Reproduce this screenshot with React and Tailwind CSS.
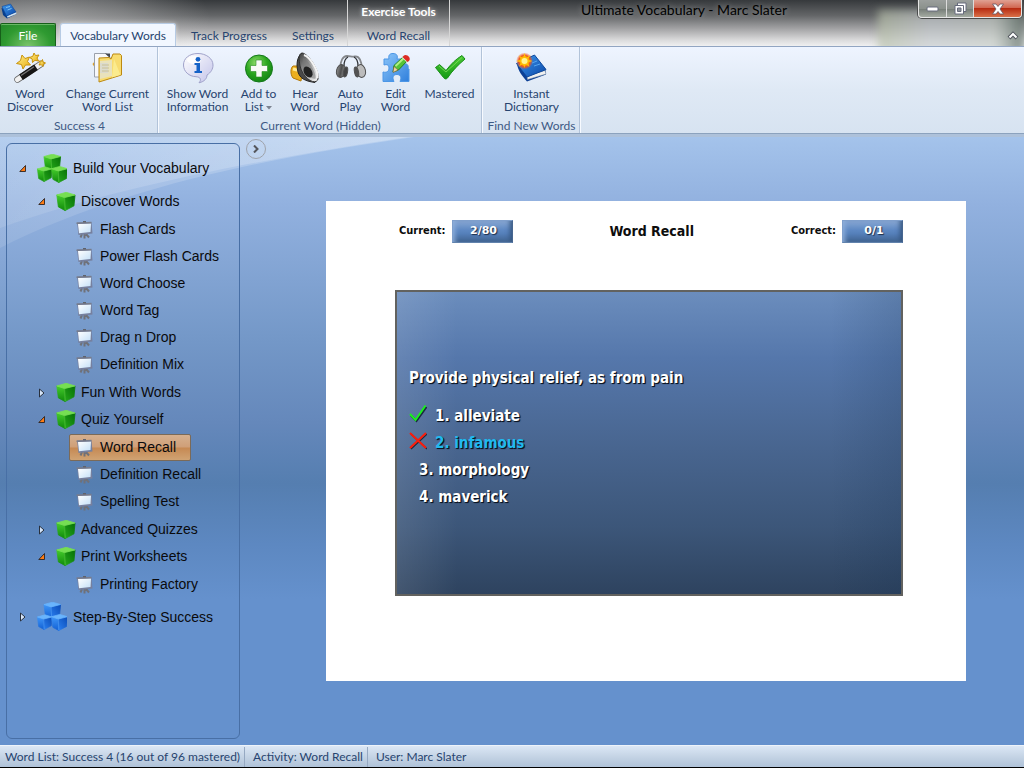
import React from "react";

const lato = "font-[Lato,'Open_Sans',sans-serif]";

function Defs() {
  return (
    <svg width="0" height="0" className="absolute" aria-hidden="true">
      <defs>
        <linearGradient id="gold" x1="0" y1="0" x2="1" y2="1">
          <stop offset="0" stopColor="#fff08a" />
          <stop offset="1" stopColor="#e8ab10" />
        </linearGradient>
        <linearGradient id="steel" x1="0" y1="0" x2="1" y2="1">
          <stop offset="0" stopColor="#3a3a3a" />
          <stop offset=".5" stopColor="#a8a8a8" />
          <stop offset="1" stopColor="#fafafa" />
        </linearGradient>
        <linearGradient id="bubble" x1="0" y1="0" x2="1" y2="1">
          <stop offset="0" stopColor="#ffffff" />
          <stop offset="1" stopColor="#c3c4ea" />
        </linearGradient>
        <radialGradient id="plus" cx=".4" cy=".3" r=".8">
          <stop offset="0" stopColor="#8fdc6a" />
          <stop offset=".5" stopColor="#2ba61f" />
          <stop offset="1" stopColor="#0e7c12" />
        </radialGradient>
        <linearGradient id="puzzle" x1="0" y1="0" x2="1" y2="1">
          <stop offset="0" stopColor="#8cc6fa" />
          <stop offset="1" stopColor="#2f7fdc" />
        </linearGradient>
        <linearGradient id="tick" x1="0" y1="0" x2="0" y2="1">
          <stop offset="0" stopColor="#4cc935" />
          <stop offset="1" stopColor="#149a14" />
        </linearGradient>
        <linearGradient id="cover" x1="0" y1="0" x2="1" y2="1">
          <stop offset="0" stopColor="#3f9bf0" />
          <stop offset="1" stopColor="#0b47a8" />
        </linearGradient>
        <radialGradient id="spark">
          <stop offset="0" stopColor="#fffbe0" />
          <stop offset=".4" stopColor="#ffc800" />
          <stop offset=".65" stopColor="#f2571c" />
          <stop offset="1" stopColor="#f2571c" stopOpacity="0" />
        </radialGradient>
        <linearGradient id="can" x1="0" y1="0" x2="1" y2="0">
          <stop offset="0" stopColor="#8d8d8d" />
          <stop offset=".5" stopColor="#4e4e4e" />
          <stop offset="1" stopColor="#9a9a9a" />
        </linearGradient>
        <linearGradient id="screen" x1="0" y1="0" x2="1" y2="1">
          <stop offset="0" stopColor="#ffffff" />
          <stop offset="1" stopColor="#c4e0f8" />
        </linearGradient>
        <linearGradient id="greenLeft" x1="0" y1="0" x2="0" y2="1">
          <stop offset="0" stopColor="#45cc2c" />
          <stop offset="1" stopColor="#108a0b" />
        </linearGradient>
        <linearGradient id="greenRight" x1="0" y1="1" x2="1" y2="0">
          <stop offset="0" stopColor="#24a81a" />
          <stop offset="1" stopColor="#077006" />
        </linearGradient>
        <linearGradient id="blueLeft" x1="0" y1="0" x2="0" y2="1">
          <stop offset="0" stopColor="#3f96f8" />
          <stop offset="1" stopColor="#1260d4" />
        </linearGradient>
        <linearGradient id="blueRight" x1="0" y1="1" x2="1" y2="0">
          <stop offset="0" stopColor="#2b80f0" />
          <stop offset="1" stopColor="#0a4cb8" />
        </linearGradient>
      </defs>
    </svg>
  );
}

const Icon = ({ children, size = 32 }) => (
  <svg width={size} height={size} viewBox={`0 0 ${size} ${size}`} aria-hidden="true" className="shrink-0">
    {children}
  </svg>
);

const Wand = () => (
  <Icon>
    <path d="M3.500 27.500 L27 12" stroke="#666" strokeWidth="6.500" strokeLinecap="round" />
    <path d="M3.500 27.500 L27 12" stroke="#f1f1f1" strokeWidth="5" strokeLinecap="round" />
    <path d="M7 25.200 L22 15.300" stroke="#151515" strokeWidth="6.500" />
    <path d="M7 23.500 L20 14.800" stroke="#777" strokeWidth="1.200" />
    <g fill="url(#gold)" stroke="#c8930c" strokeWidth="1" strokeLinejoin="round">
      <path d="M8 3 L11 6.500 L15.500 5 L13.500 9.500 L16.500 13 L11.500 13 L9 17 L7.500 12.500 L2.500 11.500 L6.500 8.500 Z" />
      <path d="M20 1 L21.500 3.500 L25 3 L23 6 L24.500 9 L21 8.300 L18.500 10.500 L18.200 7 L15.500 5.500 L18.800 4.300 Z" />
      <path d="M28.500 7.500 L29 10 L31.500 11 L29.300 12 L29 14.500 L27.300 12.700 L25 13 L26.200 11 L25.200 9 L27.500 9.300 Z" />
    </g>
  </Icon>
);

const Folder = () => (
  <Icon>
    <path d="M0.500 12 L3 9 L3 16 Z" fill="#dc9e28" />
    <path d="M2.500 1.500 H14 L18 5 V25 H2.500 Z" fill="#f7f8fb" stroke="#9aa0ab" />
    <path d="M13 1.500 L18 6 V1.500 Z" fill="#454a52" />
    <path d="M7 30 L7 6 L17 5.500 L19 7 L21 2 H28 L29.500 3.500 L29.500 23 Z" fill="#f8dc70" stroke="#bd8911" strokeLinejoin="round" />
    <path d="M8 9 L20 8 V24 L8 27 Z" fill="#e6e3c8" opacity=".85" />
    <path d="M8 11 H16 V21 H8 Z" fill="#d5d8d4" opacity=".7" />
    <path d="M10 13 H17 M10 16 H17 M10 19 H17" stroke="#c9c096" />
    <path d="M22 7 L28.500 23 L20 25.500 Z" fill="#fcf098" opacity=".75" />
  </Icon>
);

const Info = () => (
  <Icon>
    <path d="M16 1.500 C7 1.500 1.500 6.500 1.500 13 C1.500 19.500 7 24.500 14 24.700 C19 25 19.500 28 17 30.800 C23 29.500 25 26 25 23 C29 20.500 31 17 31 13 C31 6.500 24 1.500 16 1.500 Z" fill="url(#bubble)" stroke="#a0a2ca" />
    <ellipse cx="12" cy="8" rx="7" ry="4" fill="#fff" opacity=".8" />
    <circle cx="16" cy="7.300" r="2.400" fill="#1562c7" />
    <path d="M12.500 11 H18 V19 H20 V21 H12.500 V19 H14.500 V13 H12.500 Z" fill="#1562c7" />
  </Icon>
);

const Plus = () => (
  <Icon>
    <circle cx="16" cy="16.500" r="13.500" fill="url(#plus)" stroke="#14791a" />
    <path d="M13 8 H19 V13.500 H24.500 V19.500 H19 V25 H13 V19.500 H7.500 V13.500 H13 Z" fill="#f8faf7" stroke="#288c22" strokeWidth=".6" />
  </Icon>
);

const Speaker = () => (
  <Icon>
    <path d="M4 14 C1.500 16 1 22 4 26 L12 29 L14 14 Z" fill="#ecaf1f" stroke="#b37807" />
    <path d="M4 17 L12 19" stroke="#ffe892" strokeWidth="3" />
    <path d="M13 1 C8 5 7 12 9 20 C11 26 15 29 26 30.500 Z" fill="#494949" stroke="#222" />
    <path d="M13 1 C19 1 31 19 29 27 C27 34 14 27 11 14 C10 8 9 2 13 1 Z" fill="url(#steel)" stroke="#333" />
    <path d="M14 6 C19 7 28 22 26.500 26.500 C24 28 16 23 14 14 Z" fill="#777" opacity=".55" />
    <ellipse cx="19" cy="20" rx="4" ry="6" transform="rotate(-30 19 20)" fill="#222" />
    <path d="M15 3 C21 5 30 19 28.500 26" fill="none" stroke="#f4f4f4" strokeWidth="2" />
  </Icon>
);

const Headphones = () => (
  <Icon>
    <path d="M5.500 16 C5 9 8 4 12 4 C15 4 17 5 20 4.500 C24 4 27 9 26.500 16" fill="none" stroke="#85878b" strokeWidth="1.800" />
    <path d="M9 14 C9 9 10 6.500 13 5 M23 14 C23 9 22 6.500 19 5" fill="none" stroke="#303236" strokeWidth="1.300" />
    <g stroke="#505050" strokeWidth="1">
      <ellipse cx="6" cy="19" rx="4.500" ry="6.500" transform="rotate(12 6 19)" fill="url(#can)" />
      <ellipse cx="10.500" cy="20" rx="2" ry="5" transform="rotate(12 10.500 20)" fill="#444" />
      <ellipse cx="26" cy="19" rx="4.500" ry="6.500" transform="rotate(-12 26 19)" fill="#bcbcbc" />
      <ellipse cx="21.500" cy="20" rx="2" ry="5" transform="rotate(-12 21.500 20)" fill="#535353" />
    </g>
  </Icon>
);

const Puzzle = () => (
  <Icon>
    <path d="M4 7 H9 C8 3 10 1.500 13 1.500 C17 1.500 18 4 17 7 H23 V12 C27 11 29 13 28 17 H29 V29.500 H20 C22 25 20 22.500 17 22.500 C13 22.500 12 25.500 14 29.500 H3 V20 C7 21 9 19 9 16 C9 13 7 12 4 13 Z" fill="url(#puzzle)" stroke="#4c96e6" />
    <path d="M13 20 L14 13.500 L24 4 L28 8 L18.500 18 Z" fill="#56c337" stroke="#227e1c" strokeLinejoin="round" />
    <path d="M15.500 14 L25 5" stroke="#b0ef84" strokeWidth="2" />
    <path d="M13 20.500 L14 14.500 L18 18 Z" fill="#f1d3a0" stroke="#705532" strokeWidth=".5" />
    <path d="M22 5.500 L23.500 4 L28 8.500 L26.500 10 Z" fill="#e9eaed" />
    <path d="M23.500 4 C26 1 32 6 29 9 L27.500 10 L22.500 5 Z" fill="#dc2c24" />
  </Icon>
);

const Tick = () => (
  <Icon>
    <path d="M1.500 15.500 L5.500 12.500 L12 18.500 C17 12 22 7 28 3.500 L31 7 C24 13 18 19 13.500 26 C12 27.500 10.500 27 9.500 25.500 Z" fill="url(#tick)" stroke="#168e16" strokeLinejoin="round" />
    <path d="M5 14 L12 20 L28 5.500" fill="none" stroke="#8be765" strokeWidth="1" opacity=".7" />
  </Icon>
);

const Book = () => (
  <Icon>
    <path d="M1 12 L11 24 L29.500 18 L30 22.500 L11 29.500 C7 25 2 19 1 12 Z" fill="#0c3f95" />
    <path d="M11 24 L29 18.500 L30 22 L11.500 27.500 Z" fill="#f0f1f1" stroke="#8794a5" strokeWidth=".5" />
    <path d="M0.500 11.500 L18.500 3 L30 17.500 L11 25 Z" fill="url(#cover)" stroke="#0c479c" />
    <path d="M16 11 L21 9 M18 14 L24 12" stroke="#55a5ef" />
    <circle cx="8.500" cy="9" r="8.500" fill="url(#spark)" />
    <path d="M8.500 1 L10 6 L14.500 3 L12 7.500 L16.500 9 L12 10.500 L13.500 15 L9.500 12 L8.500 16 L7 12 L3 14.500 L5 10.500 L0.500 9 L5 7.500 L3 3.500 L7 6 Z" fill="#ffbf00" />
    <circle cx="8.500" cy="9" r="3" fill="#fff391" />
  </Icon>
);

const AppBook = () => (
  <Icon size={16}>
    <path d="M0.500 5 L2 12 L6 15.500 L15.500 11 L14 8 Z" fill="#083e8c" />
    <path d="M6 13 L15 9 L15.500 11 L6.500 14.800 Z" fill="#d4e3ef" />
    <path d="M1 3.500 L9.500 1 L15 9 L5.500 13 Z" fill="url(#cover)" stroke="#0d4a9c" strokeWidth=".6" />
    <path d="M5 4.500 L9 3.500 M6.500 7 L10.500 5.500" stroke="#7ec4f7" />
  </Icon>
);

function Cube({ x, y, s, c }) {
  return (
    <g transform={`translate(${x} ${y}) scale(${s})`} strokeLinejoin="round">
      <path d="M0.500 3.500 L8 6 L8.500 18.500 L2 15 Z" fill={c.left} stroke={c.left} strokeWidth=".8" />
      <path d="M8 6 L18 3.500 L17 14 L8.500 18.500 Z" fill={c.right} stroke={c.right} strokeWidth=".8" />
      <path d="M0.500 3.500 L9.500 1 L18 3.500 L8 6 Z" fill={c.top} stroke={c.top} strokeWidth=".8" />
      <path d="M8 6 L8.500 18" stroke={c.top} strokeWidth=".7" opacity=".6" />
    </g>
  );
}
const green = { top: "#76df52", left: "url(#greenLeft)", right: "url(#greenRight)" };
const blue = { top: "#69b4fd", left: "url(#blueLeft)", right: "url(#blueRight)" };

const Cubes = ({ c }) => (
  <Icon size={30}>
    <Cube x={6.5} y={-0.8} s={0.95} c={c} />
    <Cube x={0} y={12} s={0.84} c={c} />
    <Cube x={14} y={11.5} s={0.92} c={c} />
  </Icon>
);
const OneCube = () => (
  <Icon size={20}>
    <Cube x={0.3} y={-0.7} s={1.04} c={green} />
  </Icon>
);
const Easel = () => (
  <Icon size={18}>
    <path d="M6 13 L4.500 16.500 M10 13 L13 16.500 M8.500 12 V17.500" stroke="#6f7179" strokeWidth="2" />
    <path d="M1 1.500 H15.500 L16.500 12.500 L2.500 14 Z" fill="#76809f" />
    <path d="M2 3 L15 2.500 L14.500 11 L3 12.300 Z" fill="url(#screen)" />
    <path d="M0.500 2.200 L15.500 1.500" stroke="#777c8c" strokeWidth="1.600" />
    <path d="M7 .6 H10" stroke="#5e626c" strokeWidth="1.500" />
  </Icon>
);
const Expander = ({ open }) => (
  <svg width="8" height="10" viewBox="0 0 8 10" aria-hidden="true" className="shrink-0">
    {open ? (
      <path d="M6.500 1.500 V7.500 H0.800 Z" fill="#ff7c14" stroke="#2b2320" strokeWidth=".9" />
    ) : (
      <path d="M1.500 1 V9 L6 5 Z" fill="#d7e6fa" stroke="#28303d" />
    )}
  </svg>
);

function RibbonButton({ icon, lines, width, drop }) {
  return (
    <button className={`flex flex-col items-center gap-[3px] ${width}`}>
      {icon}
      <span className="text-[12px] leading-[13px] whitespace-nowrap">
        {lines.map((l, i) => (
          <span key={l} className="block">
            {l}
            {drop && i === 1 && (
              <svg width="6" height="4" viewBox="0 0 6 4" className="ml-[3px] inline-block" aria-hidden="true">
                <path d="M0 0 H6 L3 3.500 Z" fill="#7b828f" />
              </svg>
            )}
          </span>
        ))}
      </span>
    </button>
  );
}

function RibbonGroup({ label, children }) {
  return (
    <section aria-label={label} className="flex flex-col justify-between border-r border-[#b2c3d9] pt-[5px] pl-[2px] shadow-[1px_0_0_#f7faff]">
      <div className="flex items-start">{children}</div>
      <div className="text-center text-[12px] leading-[15px] text-[#3e5a85]">{label}</div>
    </section>
  );
}

function Header() {
  return (
    <header className="relative flex h-[47px] shrink-0 overflow-hidden border-b border-[#92a5c2] bg-[radial-gradient(ellipse_170px_70px_at_40px_20px,#d8d8d880,#cccccc55_50%,transparent),linear-gradient(180deg,#36393c_0%,#646668_34%,#a2a2a4_62%,#dcdcdd_88%,#f0f0f1_100%)]">
      <div className="absolute top-[10px] right-0 h-[44px] w-[146px] bg-[linear-gradient(90deg,#b5bea6aa,#c7ccd0aa_35%,#c6cdc7aa_80%,#62726acc)] blur-[4px]" />
      <div className="relative flex w-[347px] flex-col justify-between">
        <div className="pt-[3px] pl-[1px]">
          <AppBook />
        </div>
        <nav className="flex items-end text-[12px] text-[#27446f]">
          <button className="h-[23px] w-[56px] rounded-t-[2px] border border-b-0 border-[#165f19] bg-[radial-gradient(ellipse_at_bottom,#79c36a_0%,#2f9a31_60%,#23872a_100%)] pt-[2px] text-white shadow-[inset_0_1px_0_#69b866]">
            File
          </button>
          <button className="ml-[4px] h-[23px] w-[116px] rounded-t-[3px] border border-b-0 border-[#b7cbe4] bg-[#f2f7ff] pt-[2px] shadow-[0_0_4px_#ffffff80]">
            Vocabulary Words
          </button>
          <button className="h-[23px] w-[106px] pt-[2px]">Track Progress</button>
          <button className="h-[23px] w-[62px] pt-[2px]">Settings</button>
        </nav>
      </div>
      <div className="relative flex w-[103px] flex-col justify-between border-x border-[#d6d6d6] bg-[linear-gradient(180deg,#46494b00,#ffffff22)] text-center text-[12px]">
        <div className="pt-[4px] leading-[16px] font-bold text-white [text-shadow:0_0_4px_#ffffff99]">Exercise Tools</div>
        <button className="h-[23px] pt-[2px] text-[#27446f]">Word Recall</button>
      </div>
      <div className="relative flex flex-1 flex-col justify-between">
        <div className="flex items-start">
          <h1 className="flex-1 text-center text-[14px] leading-[19px] text-black [text-shadow:0_0_6px_#ffffff66]">
            Ultimate Vocabulary - Marc Slater
          </h1>
          <div className="mr-[2px] flex h-[18px] rounded-b-[4px] border border-t-0 border-[#e6e6e6] bg-[linear-gradient(180deg,#9b9f9d,#8b918c_50%,#747b76_51%,#a4aba2)] shadow-[0_0_0_1px_#4b4d4d]">
            <button aria-label="Minimize" className="flex w-[28px] items-center justify-center border-r border-[#dcdcdc]">
              <svg width="13" height="6" viewBox="0 0 13 6"><rect x="1" y="1" width="11" height="4" rx="1" fill="#fff" stroke="#666b7c" /></svg>
            </button>
            <button aria-label="Restore" className="flex w-[27px] items-center justify-center border-r border-[#dcdcdc]">
              <svg width="13" height="13" viewBox="0 0 13 13">
                <path d="M3.500 1 H12 V9.500 H3.500 Z" fill="#fff" stroke="#666b7c" />
                <path d="M1 3.500 H9.500 V12 H1 Z" fill="#fff" stroke="#666b7c" />
                <path d="M3.500 6 H7 V9.500 H3.500 Z" fill="#8d9298" stroke="#666b7c" />
              </svg>
            </button>
            <button aria-label="Close" className="flex w-[47px] items-center justify-center rounded-br-[3px] bg-[linear-gradient(180deg,#e0a193,#d0644d_48%,#b72c12_50%,#d97048)]">
              <svg width="14" height="12" viewBox="0 0 14 12">
                <path d="M1.500 1 H5 L7 3.500 L9 1 H12.500 L9 6 L12.500 11 H9 L7 8.500 L5 11 H1.500 L5 6 Z" fill="#fff" stroke="#655763" strokeWidth=".8" />
              </svg>
            </button>
          </div>
        </div>
        <button aria-label="Minimize the ribbon" className="mr-[5px] mb-[6px] self-end">
          <svg width="12" height="9" viewBox="0 0 12 9">
            <path d="M2 7 L6 3 L10 7" fill="none" stroke="#4e535b" strokeWidth="4" />
            <path d="M2.500 6.500 L6 3 L9.500 6.500" fill="none" stroke="#fff" strokeWidth="2" />
          </svg>
        </button>
      </div>
    </header>
  );
}

const tree = [
  { name: "Discover Words", open: true, items: ["Flash Cards", "Power Flash Cards", "Word Choose", "Word Tag", "Drag n Drop", "Definition Mix"] },
  { name: "Fun With Words", open: false, items: [] },
  { name: "Quiz Yourself", open: true, items: ["Word Recall", "Definition Recall", "Spelling Test"] },
  { name: "Advanced Quizzes", open: false, items: [] },
  { name: "Print Worksheets", open: true, items: ["Printing Factory"] },
];

function Sidebar() {
  return (
    <nav className="mt-[6px] mb-[6px] ml-[6px] w-[234px] shrink-0 rounded-[6px] border border-[#486fa5] pt-[5px] font-['Liberation_Sans',Arial,sans-serif] text-[14px] text-[#0a0a0c]">
      <button className="flex h-[39px] items-center pl-[12px]">
        <Expander open />
        <span className="ml-[10px]"><Cubes c={green} /></span>
        <span className="ml-[6px]">Build Your Vocabulary</span>
      </button>
      <ul>
        {tree.map((g) => (
          <li key={g.name}>
            <button className="flex h-[27px] items-center pl-[31px]">
              <Expander open={g.open} />
              <span className="ml-[10px]"><OneCube /></span>
              <span className="ml-[5px]">{g.name}</span>
            </button>
            {g.open && (
              <ul className="py-px pl-[62px]">
                {g.items.map((n) => (
                  <li key={n}>
                    <button
                      className={
                        n === "Word Recall"
                          ? "flex h-[27px] items-center gap-[6px] rounded-[2px] border border-[#7b6a58] bg-[linear-gradient(180deg,#d5b08f_0%,#cf9f78_48%,#c68953_52%,#d0a373_100%)] pr-[14px] pl-[6px]"
                          : "flex h-[27px] items-center gap-[6px] border border-transparent pr-[14px] pl-[6px]"
                      }
                    >
                      <Easel />
                      {n}
                    </button>
                  </li>
                ))}
              </ul>
            )}
          </li>
        ))}
      </ul>
      <button className="flex h-[36px] items-center pl-[12px]">
        <Expander />
        <span className="ml-[10px]"><Cubes c={blue} /></span>
        <span className="ml-[6px]">Step-By-Step Success</span>
      </button>
    </nav>
  );
}

function Score({ label, value }) {
  return (
    <div className="flex items-center gap-[6px] text-[11px] font-bold text-[#0d0d0d]">
      <span>{label}</span>
      <output className="flex h-[23px] w-[61px] items-center justify-center border border-[#7f9fcc] border-r-[#47668f] border-b-[#6283ad] bg-[linear-gradient(180deg,#87a7d3_0%,#5c87c2_45%,#5580ba_60%,#3f628f_100%)] pl-[3px] font-['DejaVu_Sans',Verdana,sans-serif] text-[11px] text-white shadow-[inset_5px_0_5px_-3px_#8fb0dc,inset_-5px_0_5px_-3px_#35557f] [text-shadow:1px_1px_1px_#1d2d48]">
        {value}
      </output>
    </div>
  );
}

function Answer({ mark, tone, children }) {
  return (
    <li>
      <button className={`flex h-[27px] items-center gap-[8px] ${tone} ${mark ? "" : "pl-[10px]"}`}>
        {mark}
        {children}
      </button>
    </li>
  );
}

function Quiz() {
  return (
    <article className="flex min-h-[480px] w-[640px] flex-col bg-white pt-[19px] pr-[63px] pl-[69px] font-['DejaVu_Sans_Condensed','Noto_Sans',sans-serif]">
      <div className="flex items-center justify-between pl-[4px]">
        <Score label="Current:" value="2/80" />
        <h2 className="text-[14px] font-bold text-[#0d0d0d]">Word Recall</h2>
        <Score label="Correct:" value="0/1" />
      </div>
      <div className="mt-[47px] min-h-[306px] border-2 border-[#62625f] bg-[linear-gradient(90deg,#ffffff1a_0%,transparent_12%,transparent_86%,#0f2a4a2a_100%),linear-gradient(180deg,#6b8dbd_0%,#5577ab_22%,#48658f_52%,#3c5679_78%,#2e435f_100%)] pt-[74px] pl-[12px] text-[15px] font-bold text-white [text-shadow:1px_1px_1px_#0b1422,1px_1px_0_#15202f]">
        <p className="leading-[24px]">Provide physical relief, as from pain</p>
        <ol className="mt-[13px] [&_button]:[text-shadow:1px_1px_1px_#0b1422,1px_1px_0_#15202f]">
          <Answer
            tone="text-white"
            mark={
              <svg width="18" height="26" viewBox="0 0 18 26" role="img" aria-label="Right answer">
                <path d="M2 11.500 L7.500 17 L17.500 3" fill="none" stroke="#1b2c3f" strokeWidth="2" />
                <path d="M1 10 L6.500 16 L16.500 1.500" fill="none" stroke="#19f01d" strokeWidth="2" />
              </svg>
            }
          >
            1. alleviate
          </Answer>
          <Answer
            tone="text-[#20b9ef]"
            mark={
              <svg width="18" height="26" viewBox="0 0 18 26" role="img" aria-label="Wrong answer">
                <path d="M2 3 L18 18 M18 3 L2 18" stroke="#1b2c3f" strokeWidth="1.500" />
                <path d="M1 2 L17 17 M17 2 L1 17" stroke="#fb1d0c" strokeWidth="2" />
              </svg>
            }
          >
            2. infamous
          </Answer>
          <Answer tone="text-white">3. morphology</Answer>
          <Answer tone="text-white">4. maverick</Answer>
        </ol>
      </div>
    </article>
  );
}

export default function App() {
  return (
    <div className={`flex min-h-screen flex-col bg-black ${lato}`}>
      <Defs />
      <Header />
      <div className="flex h-[87px] shrink-0 border-b border-[#8ba2be] bg-[linear-gradient(180deg,#eef4ff_0%,#dfe9f5_50%,#d7e3f1_100%)] text-[#27446f]">
        <RibbonGroup label="Success 4">
          <RibbonButton icon={<Wand />} lines={["Word", "Discover"]} width="w-[56px]" />
          <RibbonButton icon={<Folder />} lines={["Change Current", "Word List"]} width="w-[99px]" />
        </RibbonGroup>
        <RibbonGroup label="Current Word (Hidden)">
          <RibbonButton icon={<Info />} lines={["Show Word", "Information"]} width="w-[75px]" />
          <RibbonButton icon={<Plus />} lines={["Add to", "List"]} drop width="w-[47px]" />
          <RibbonButton icon={<Speaker />} lines={["Hear", "Word"]} width="w-[46px]" />
          <RibbonButton icon={<Headphones />} lines={["Auto", "Play"]} width="w-[45px]" />
          <RibbonButton icon={<Puzzle />} lines={["Edit", "Word"]} width="w-[45px]" />
          <RibbonButton icon={<Tick />} lines={["Mastered"]} width="w-[63px]" />
        </RibbonGroup>
        <RibbonGroup label="Find New Words">
          <RibbonButton icon={<Book />} lines={["Instant", "Dictionary"]} width="w-[95px]" />
        </RibbonGroup>
      </div>
      <div className="h-[3px] shrink-0 bg-[#adc1da]" />
      <main className="relative flex flex-1 bg-[linear-gradient(180deg,#a4c3eb_0%,#92b1df_11%,#7498c8_33%,#6588bb_47%,#557eb0_57%,#5d88c1_67%,#6591cd_76%,#6591cd_100%)]">
        <svg className="absolute top-0 left-0" width="430" height="120" viewBox="0 0 430 120" aria-hidden="true">
          <defs>
            <linearGradient id="swoosh" x1="0" y1="0" x2="1" y2="0">
              <stop offset="0" stopColor="#fff" stopOpacity=".1" />
              <stop offset="1" stopColor="#fff" stopOpacity=".24" />
            </linearGradient>
          </defs>
          <path d="M0 0 H408 C290 18 130 45 0 91 Z" fill="url(#swoosh)" />
          <path d="M0 0 H414 C290 18 130 45 0 111 Z" fill="url(#swoosh)" />
        </svg>
        <div className="relative flex flex-1">
          <Sidebar />
          <button
            aria-label="Hide the navigation panel"
            className="mt-[2px] mr-[2px] ml-[6px] flex h-[20px] w-[20px] shrink-0 items-center justify-center rounded-full border border-[#9fa3ab]"
          >
            <svg width="8" height="8" viewBox="0 0 8 8"><path d="M2 0.500 L5.500 4 L2 7.500" fill="none" stroke="#54565c" strokeWidth="2" /></svg>
          </button>
          <div className="flex flex-1 items-center justify-center">
            <Quiz />
          </div>
        </div>
      </main>
      <footer className="mb-px flex h-[22px] shrink-0 items-center border-t border-[#edf3fa] bg-[linear-gradient(180deg,#dbe7f5,#c5d4e5_50%,#afc2d8)] text-[12px] text-[#27446f]">
        <span className="border-r border-[#96a9c2] pr-[4px] pl-[5px] leading-[20px]">Word List: Success 4 (16 out of 96 mastered)</span>
        <span className="border-r border-[#96a9c2] pr-[4px] pl-[8px] leading-[20px]">Activity: Word Recall</span>
        <span className="pl-[8px] leading-[20px]">User: Marc Slater</span>
      </footer>
    </div>
  );
}
